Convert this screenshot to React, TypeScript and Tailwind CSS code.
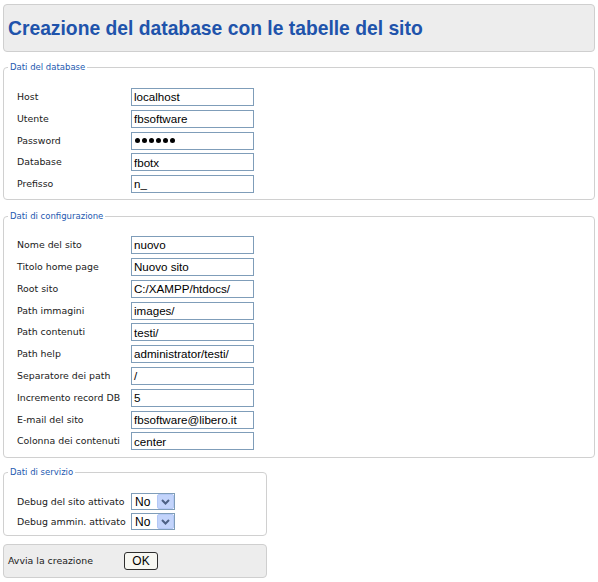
import React from "react";

const labelFont = { fontFamily: '"DejaVu Sans", Verdana, sans-serif' };
const inputFont = { fontFamily: '"Liberation Sans", Arial, sans-serif' };

function Row({ label, value }: { label: string; value: string }) {
  return (
    <div className="flex items-center h-[18px]">
      <div className="w-[114px] text-[9.4px] text-[#1a1a1a] whitespace-nowrap" style={labelFont}>
        {label}
      </div>
      <div
        className="w-[123px] h-[18px] border border-[#7f9db9] bg-white flex items-center pl-[2px] text-[11.6px] text-black leading-none whitespace-nowrap overflow-hidden"
        style={inputFont}
      >
        {value}
      </div>
    </div>
  );
}

function PwRow({ label }: { label: string }) {
  return (
    <div className="flex items-center h-[18px]">
      <div className="w-[114px] text-[9.4px] text-[#1a1a1a]" style={labelFont}>
        {label}
      </div>
      <div className="w-[123px] h-[18px] border border-[#7f9db9] bg-white flex items-center pl-[3px] gap-[2px]">
        {[0, 1, 2, 3, 4, 5].map((i) => (
          <span key={i} className="w-[5px] h-[5px] rounded-full bg-black" />
        ))}
      </div>
    </div>
  );
}

function SelectRow({ label }: { label: string }) {
  return (
    <div className="flex items-center h-[17px]">
      <div className="w-[114px] text-[9.4px] text-[#1a1a1a] whitespace-nowrap" style={labelFont}>
        {label}
      </div>
      <div className="w-[44px] h-[17px] border border-[#7f9db9] bg-white flex items-center">
        <span className="flex-1 pl-[3px] text-[12px] leading-none text-black" style={inputFont}>
          No
        </span>
        <span className="w-[17px] h-[15px] bg-[#c3d4fb] border border-[#b4c8f6] rounded-[2px] flex items-center justify-center">
          <svg width="9" height="6" viewBox="0 0 9 6">
            <path d="M1 1 L4.5 4.5 L8 1" fill="none" stroke="#4d6185" strokeWidth="2" />
          </svg>
        </span>
      </div>
    </div>
  );
}

function Fieldset({
  legend,
  className,
  children,
  pt,
  pb,
}: {
  legend: string;
  className: string;
  children: React.ReactNode;
  pt: string;
  pb: string;
}) {
  return (
    <fieldset className={`border border-[#d0d0d0] rounded-[4px] ${className}`}>
      <legend
        className="ml-[4px] px-[2px] text-[8.5px] leading-[13px] text-[#2459b0]"
        style={labelFont}
      >
        {legend}
      </legend>
      <div className={`pl-[13px] flex flex-col ${pt} ${pb}`}>{children}</div>
    </fieldset>
  );
}

export default function App() {
  return (
    <div className="w-[598px] h-[582px] bg-white overflow-hidden pt-[4px]">
      <div className="mx-[3px] h-[48px] border border-[#cfcfcf] rounded-[4px] bg-[#ededed] flex items-center pl-[4px] pt-[2px]">
        <h1
          className="text-[19.3px] font-bold text-[#2053ab] leading-none"
          style={inputFont}
        >
          Creazione del database con le tabelle del sito
        </h1>
      </div>

      <Fieldset legend="Dati del database" className="mx-[3px] mt-[9px]" pt="pt-[14px] gap-[3.8px]" pb="pb-[6px]">
        <Row label="Host" value="localhost" />
        <Row label="Utente" value="fbsoftware" />
        <PwRow label="Password" />
        <Row label="Database" value="fbotx" />
        <Row label="Prefisso" value="n_" />
      </Fieldset>

      <Fieldset legend="Dati di configurazione" className="mx-[3px] mt-[10px]" pt="pt-[13px] gap-[3.8px]" pb="pb-[7px]">
        <Row label="Nome del sito" value="nuovo" />
        <Row label="Titolo home page" value="Nuovo sito" />
        <Row label="Root sito" value="C:/XAMPP/htdocs/" />
        <Row label="Path immagini" value="images/" />
        <Row label="Path contenuti" value="testi/" />
        <Row label="Path help" value="administrator/testi/" />
        <Row label="Separatore dei path" value="/" />
        <Row label="Incremento record DB" value="5" />
        <Row label="E-mail del sito" value="fbsoftware@libero.it" />
        <Row label="Colonna dei contenuti" value="center" />
      </Fieldset>

      <Fieldset legend="Dati di servizio" className="ml-[3px] w-[264px] mt-[8px]" pt="pt-[14px] gap-[3px]" pb="pb-[5px]">
        <SelectRow label="Debug del sito attivato" />
        <SelectRow label="Debug ammin. attivato" />
      </Fieldset>

      <div className="ml-[3px] mt-[8px] w-[264px] h-[34px] border border-[#cfcfcf] rounded-[4px] bg-[#ededed] flex items-center pl-[4px]">
        <span className="w-[116px] text-[9.4px] text-[#1a1a1a]" style={labelFont}>
          Avvia la creazione
        </span>
        <button
          className="w-[34px] h-[18px] border border-[#2e2e2e] rounded-[3px] bg-[#f7f7f2] text-[12px] leading-none text-black flex items-center justify-center"
          style={inputFont}
        >
          OK
        </button>
      </div>
    </div>
  );
}
